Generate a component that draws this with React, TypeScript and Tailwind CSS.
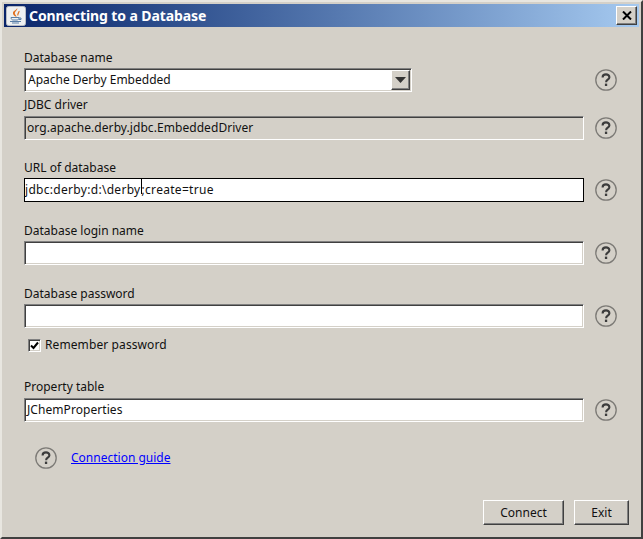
import type { ReactNode } from 'react';

const sunken =
  'border border-t-[#808080] border-l-[#808080] border-r-white border-b-white shadow-[inset_1px_1px_0_#404040,inset_-1px_-1px_0_#d4d0c8]';
const raised =
  'border border-t-white border-l-white border-r-[#404040] border-b-[#404040] shadow-[inset_-1px_-1px_0_#808080]';

function HelpIcon() {
  return (
    <svg width="22" height="22" viewBox="0 0 22 22" className="shrink-0">
      <circle cx="11" cy="11" r="10.2" fill="none" stroke="#7c7a76" strokeWidth="1.3" />
      <path d="M7.6 8.400c0-2 1.500-3 3.400-3s3.400 1 3.400 2.800c0 2.600-3.300 2.400-3.300 5" fill="none" stroke="#3c3c3c" strokeWidth="2.100" />
      <rect x="9.900" y="14.600" width="2.300" height="2.400" fill="#3c3c3c" />
    </svg>
  );
}

function Row({ children, top }: { children: ReactNode; top: string }) {
  return <div className={`flex items-center justify-between pr-[24px] ${top}`}>{children}</div>;
}

function Label({ children, className = '' }: { children: ReactNode; className?: string }) {
  return <div className={`h-[15px] leading-[15px] ${className}`}>{children}</div>;
}

function Field({ value = '', bg = 'bg-white', pad = 'pl-[2px]' }: { value?: string; bg?: string; pad?: string }) {
  return (
    <div className={`flex h-6 w-[560px] items-center tracking-[0.06px] ${pad} ${sunken} ${bg}`}>
      <span>{value}</span>
    </div>
  );
}

export default function App() {
  return (
    <div className="flex h-[539px] w-[643px] flex-col border-2 border-t-[#e8e6e0] border-l-[#e8e6e0] border-r-[#404040] border-b-[#404040] bg-[#d4d0c8] font-['Noto_Sans',sans-serif] text-[12px] text-[#111]">
      {/* title bar */}
      <div className="mx-[2px] mt-[2px] flex h-[23px] items-center bg-gradient-to-r from-[#0a246a] to-[#a6caf0] pl-[2px] pr-[2px]">
        <svg width="20" height="20" viewBox="0 0 20 20" className="shrink-0">
          <rect x="0.500" y="0.500" width="19" height="19" rx="2" fill="#eef0f2" stroke="#b8bcc4" />
          <path d="M11 2c1.500 2-3 3.500-2 6 .4 1 1.500 1.500 1.500 3C8.500 10 6.500 8.500 7 6.500 7.500 4.500 11 4 11 2z" fill="#e07020" />
          <path d="M13 5c.5 1.500-2 2.500-1 4.500" fill="none" stroke="#e07020" strokeWidth="1.200" />
          <path d="M5 11.500h8c0 1.500-1 2.500-2 2.500H7c-1 0-2-1-2-2.500zM13 12h2v1.500h-2.500M4 15.500h11M6 17h7" fill="none" stroke="#5a7fa8" strokeWidth="1" />
        </svg>
        <span className="ml-[3px] flex-1 text-[14px] font-bold tracking-[-0.1px] text-white">Connecting to a Database</span>
        <div className={`flex h-[19px] w-[21px] items-center justify-center bg-[#d4d0c8] ${raised}`}>
          <svg width="10" height="9" viewBox="0 0 10 9">
            <path d="M1 0.500l8 8M9 0.500l-8 8" stroke="#000" strokeWidth="2" />
          </svg>
        </div>
      </div>

      {/* form */}
      <div className="flex flex-1 flex-col pl-[22px]">
        <Label className="mt-[23px]">Database name</Label>
        <Row top="mt-[3px]">
          <div className={`flex h-6 w-[388px] items-center justify-between bg-white pl-[3px] pr-[1px] ${sunken}`}>
            <span>Apache Derby Embedded</span>
            <div className={`flex h-5 w-[19px] items-center justify-center bg-[#d4d0c8] ${raised}`}>
              <svg width="11" height="6" viewBox="0 0 11 6">
                <path d="M0 0h11L5.500 6z" fill="#333" />
              </svg>
            </div>
          </div>
          <HelpIcon />
        </Row>

        <Label className="mt-[5px]">JDBC driver</Label>
        <Row top="mt-[4px]">
          <Field value="org.apache.derby.jdbc.EmbeddedDriver" bg="bg-[#d4d0c8]" />
          <HelpIcon />
        </Row>

        <Label className="mt-[20px]">URL of database</Label>
        <Row top="mt-[3px]">
          <div className="flex h-6 w-[560px] items-center border border-black bg-white tracking-[0.3px]">
            <span>jdbc:derby:d:\derby</span>
            <span className="h-[15px] w-px self-start bg-black" />
            <span>;create=true</span>
          </div>
          <HelpIcon />
        </Row>

        <Label className="mt-[21px]">Database login name</Label>
        <Row top="mt-[3px]">
          <Field />
          <HelpIcon />
        </Row>

        <Label className="mt-[21px]">Database password</Label>
        <Row top="mt-[3px]">
          <Field />
          <HelpIcon />
        </Row>

        <div className="ml-[4px] mt-[10px] flex h-[14px] items-center tracking-[0.1px]">
          <div className={`flex h-[13px] w-[13px] items-center justify-center bg-white ${sunken}`}>
            <svg width="9" height="9" viewBox="0 0 9 9">
              <path d="M1 4.500l2.500 2.500L8 1.500" fill="none" stroke="#000" strokeWidth="2" />
            </svg>
          </div>
          <span className="ml-1">Remember password</span>
        </div>

        <Label className="mt-[27px]">Property table</Label>
        <Row top="mt-[4px]">
          <Field value="JChemProperties" />
          <HelpIcon />
        </Row>

        <div className="ml-[11px] mt-[25px] flex items-center">
          <HelpIcon />
          <span className="ml-[14px] text-[#0000ff] underline">Connection guide</span>
        </div>

        <div className="mt-[31px] flex justify-end gap-[10px] pr-[12px]">
          <button className={`h-[25px] w-[81px] bg-[#d4d0c8] ${raised}`}>Connect</button>
          <button className={`h-[25px] w-[55px] bg-[#d4d0c8] ${raised}`}>Exit</button>
        </div>
      </div>
    </div>
  );
}
